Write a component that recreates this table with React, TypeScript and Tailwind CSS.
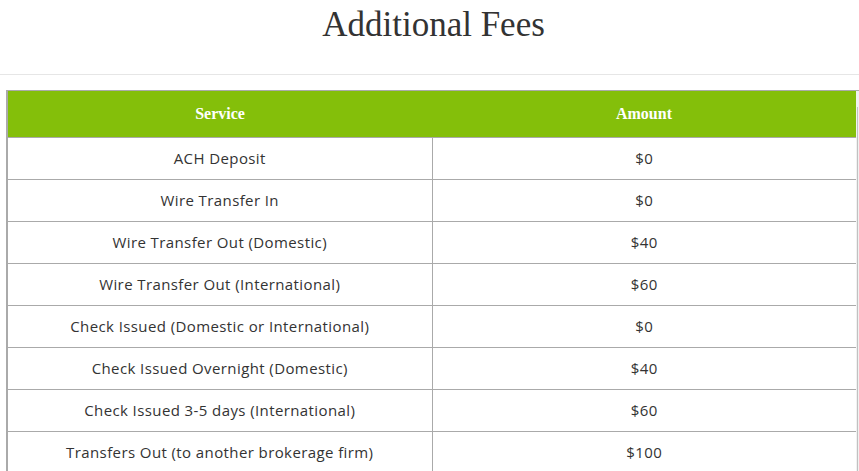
const fees = [
  { service: 'ACH Deposit', amount: '$0' },
  { service: 'Wire Transfer In', amount: '$0' },
  { service: 'Wire Transfer Out (Domestic)', amount: '$40' },
  { service: 'Wire Transfer Out (International)', amount: '$60' },
  { service: 'Check Issued (Domestic or International)', amount: '$0' },
  { service: 'Check Issued Overnight (Domestic)', amount: '$40' },
  { service: 'Check Issued 3-5 days (International)', amount: '$60' },
  { service: 'Transfers Out (to another brokerage firm)', amount: '$100' },
];

export default function App() {
  return (
    <div className="h-[471px] w-full overflow-hidden bg-white">
      <h1 className="h-[74px] pt-[3px] pl-[8px] text-center font-['Liberation_Serif',serif] text-[35px] leading-[43px] text-[#333]">
        Additional Fees
      </h1>
      <div className="h-px bg-[#e6e6e6]" />
      <div className="mt-[15px] flex pl-[6px]">
        <div className="flex-1 border-t border-l-2 border-[#aaa]">
          <table className="w-full table-fixed border-collapse">
            <thead>
              <tr className="h-[46px] bg-[#84bf0a] font-['Liberation_Serif',serif] text-[16px] font-bold text-white">
                <th className="border-b border-[#aaa] text-center">Service</th>
                <th className="border-b border-[#aaa] text-center">Amount</th>
              </tr>
            </thead>
            <tbody className="font-['Open_Sans',sans-serif] text-[15px] tracking-[0.4px] text-[#333]">
              {fees.map((row) => (
                <tr key={row.service} className="h-[42px]">
                  <td className="border-r border-b border-[#aaa] text-center">{row.service}</td>
                  <td className="border-b border-[#aaa] text-center">{row.amount}</td>
                </tr>
              ))}
            </tbody>
          </table>
        </div>
        <div className="flex w-[3px] flex-col bg-[#f1f1f1]">
          <div className="h-[17px] border-t border-[#aaa]" />
          <div className="ml-[1px] w-px flex-1 bg-[#c1c1c1]" />
        </div>
      </div>
    </div>
  );
}
